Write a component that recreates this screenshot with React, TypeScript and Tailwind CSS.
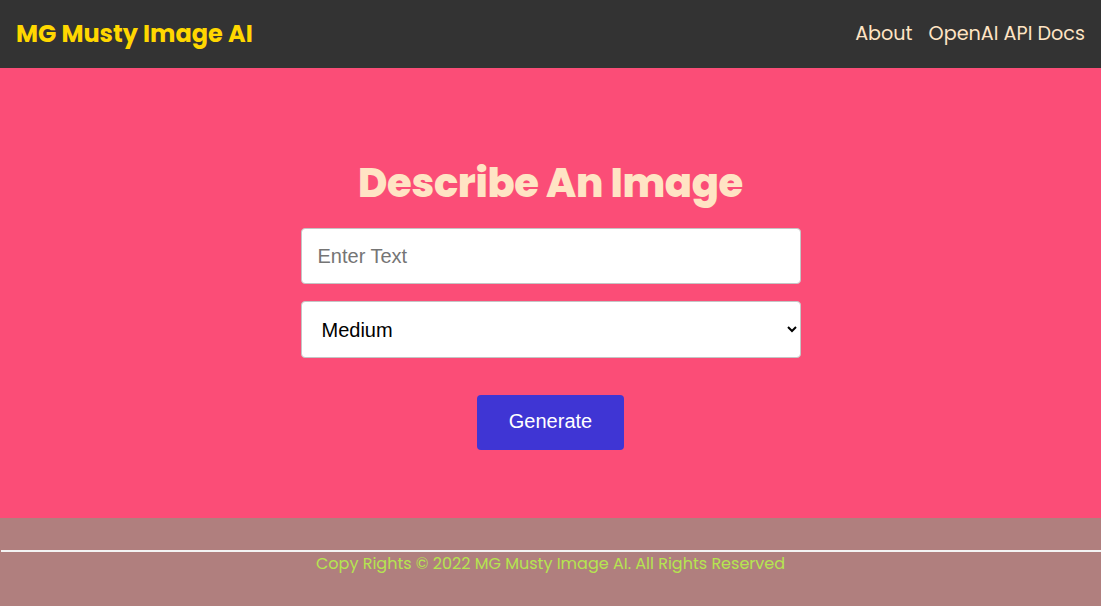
import { useState } from 'react';

const heading = { fontFamily: 'Poppins, "Noto Sans", sans-serif' };

const App = () => {
  const [prompt, setPrompt] = useState('');
  const [size, setSize] = useState('medium');

  return (
    <div className="min-h-screen flex flex-col" style={heading}>
      <header className="h-[68px] bg-[#333333] flex items-center justify-between px-4">
        <h1 className="text-[24px] font-bold text-[#ffd700]">MG Musty Image AI</h1>
        <nav className="flex items-center gap-4 text-[19.2px] text-[#ffe4c4]">
          <a href="#">About</a>
          <a href="#">OpenAI API Docs</a>
        </nav>
      </header>

      <main className="h-[450px] bg-[#fb4d77] flex flex-col items-center pt-[85px]">
        <h2 className="text-[40px] leading-[60px] font-extrabold text-[#ffe4c4] tracking-[-0.3px]">Describe An Image</h2>
        <form
          className="mt-[15px] w-[500px] flex flex-col items-center"
          onSubmit={(e) => e.preventDefault()}
          style={{ fontFamily: '"Liberation Sans", Arial, sans-serif' }}
        >
          <input
            type="text"
            value={prompt}
            onChange={(e) => setPrompt(e.target.value)}
            placeholder="Enter Text"
            className="w-full h-[56px] bg-white border border-[#c4c4c4] rounded-[4px] px-4 text-[20px] text-black placeholder:text-[#757575] outline-none"
          />
          <select
            value={size}
            onChange={(e) => setSize(e.target.value)}
            className="mt-[17px] w-full h-[57px] bg-white border border-[#c4c4c4] rounded-[4px] px-4 text-[20px] text-black outline-none"
          >
            <option value="small">Small</option>
            <option value="medium">Medium</option>
            <option value="large">Large</option>
          </select>
          <button
            type="submit"
            className="mt-[37px] w-[147px] h-[55px] pb-[3px] bg-[#3f35d4] text-white text-[20px] rounded-[4px]"
          >
            Generate
          </button>
        </form>
      </main>

      <footer className="flex-1 bg-[#b07f7e] pt-[32px]">
        <hr className="border-0 h-[2px] bg-[#f3f3f3] ml-[1px]" />
        <p className="text-center text-[16px] text-[#b5e550]">
          Copy Rights © 2022 MG Musty Image AI. All Rights Reserved
        </p>
      </footer>
    </div>
  );
};

export default App;
